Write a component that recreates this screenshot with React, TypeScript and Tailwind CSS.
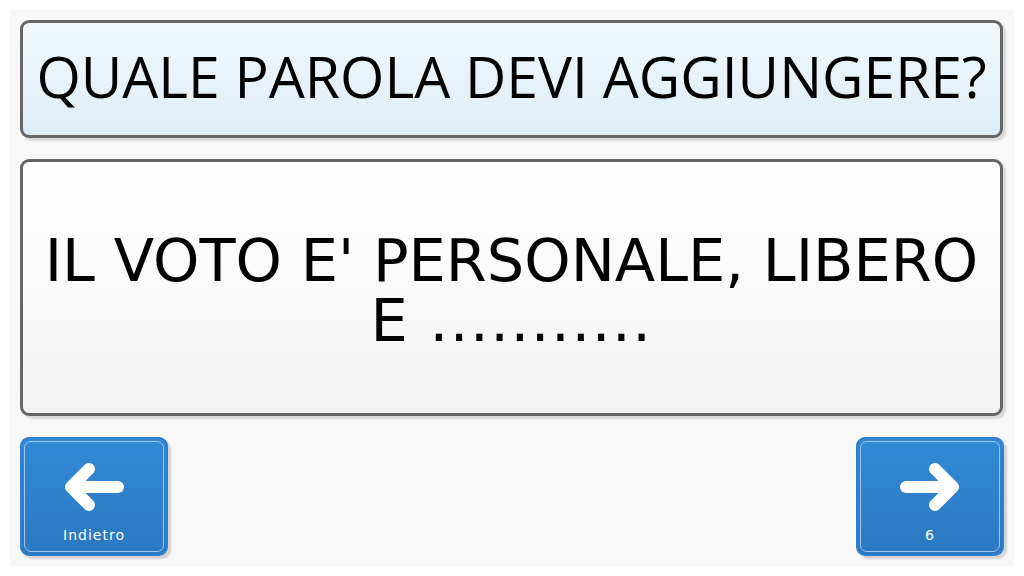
import React from "react";

function Arrow({ dir }: { dir: "left" | "right" }) {
  return (
    <svg width="64" height="52" viewBox="0 0 64 52" fill="none">
      {dir === "left" ? (
        <g stroke="white" strokeWidth="12" strokeLinecap="round" strokeLinejoin="round">
          <path d="M56 26H10" />
          <path d="M27 8L9 26L27 44" />
        </g>
      ) : (
        <g stroke="white" strokeWidth="12" strokeLinecap="round" strokeLinejoin="round">
          <path d="M8 26H54" />
          <path d="M37 8L55 26L37 44" />
        </g>
      )}
    </svg>
  );
}

function NavButton({ dir, label }: { dir: "left" | "right"; label: string }) {
  return (
    <div className="w-[148px] h-[119px] rounded-[9px] border-2 border-[#2d80cf] bg-gradient-to-b from-[#3289d6] to-[#2b78c0] shadow-[3px_3px_2px_rgba(0,0,0,0.15)] p-[2px]">
      <div className="w-full h-full rounded-[7px] border border-[#9cc7ee] flex flex-col items-center">
        <div className="mt-[19px]">
          <Arrow dir={dir} />
        </div>
        <div className="mt-[15px] text-[14px] leading-none text-white tracking-[1px] [font-family:'DejaVu_Sans',sans-serif]">
          {label}
        </div>
      </div>
    </div>
  );
}

export default function App() {
  return (
    <div className="w-[1024px] h-[576px] bg-white p-[10px]">
      <div className="w-full h-full bg-[#f8f8f8] flex flex-col px-[10px] pt-[10px] pb-[10px]">
        <div className="h-[118px] w-[983px] rounded-[9px] border-[3px] border-[#666666] bg-gradient-to-b from-[#f2f9fd] to-[#dcedf7] shadow-[3px_3px_2px_rgba(0,0,0,0.12)] flex items-center justify-center pb-[6px]">
          <span className="text-[57px] leading-none text-black [font-family:'Open_Sans',sans-serif]">
            QUALE PAROLA DEVI AGGIUNGERE?
          </span>
        </div>
        <div className="mt-[21px] h-[257px] w-[983px] rounded-[9px] border-[3px] border-[#666666] bg-gradient-to-b from-white to-[#f3f3f3] shadow-[3px_3px_2px_rgba(0,0,0,0.12)] flex items-center justify-center">
          <div className="text-center text-[59px] leading-[60px] text-black [font-family:'DejaVu_Sans',sans-serif] pt-[6px]">
            <div>IL VOTO E' PERSONALE, LIBERO</div>
            <div className="tracking-[1.5px]">E ...........</div>
          </div>
        </div>
        <div className="mt-[21px] flex justify-between">
          <NavButton dir="left" label="Indietro" />
          <NavButton dir="right" label="6" />
        </div>
      </div>
    </div>
  );
}
